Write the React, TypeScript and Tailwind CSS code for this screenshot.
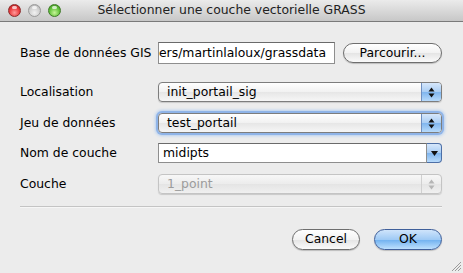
import React from 'react';

const font = { fontFamily: '"DejaVu Sans", "Liberation Sans", sans-serif' };

function Light({ tone }: { tone: 'red' | 'gray' | 'green' }) {
  const cls =
    tone === 'red'
      ? 'bg-[radial-gradient(circle_at_50%_70%,#ff9a9a_0%,#e8383a_55%,#a91b1d_100%)] border-[#8c2a2a]'
      : tone === 'green'
        ? 'bg-[radial-gradient(circle_at_50%_70%,#c8f59a_0%,#62c23a_55%,#3a8a1e_100%)] border-[#3d7a26]'
        : 'bg-[radial-gradient(circle_at_50%_70%,#f2f2f2_0%,#cfcfcf_55%,#a9a9a9_100%)] border-[#9a9a9a]';
  return (
    <div className={`relative w-[13px] h-[13px] rounded-full border ${cls}`}>
      <div className="absolute left-[3px] top-[1px] w-[5px] h-[3px] rounded-full bg-white/70" />
    </div>
  );
}

function Stepper({ disabled }: { disabled?: boolean }) {
  const fill = disabled ? '#b5b5b5' : '#111';
  return (
    <div
      className={`w-[20px] h-full flex items-center justify-center border-l ${
        disabled
          ? 'border-[#d0d0d0]'
          : 'border-[#6f8fc0] bg-[linear-gradient(#d6e7fb,#a9cdf4_50%,#7fb5ee_51%,#b7dafb)]'
      }`}
    >
      <svg width="7" height="11" viewBox="0 0 7 11">
        <path d="M3.5 0.5 L6.5 4.5 L0.5 4.5 Z" fill={fill} />
        <path d="M0.5 6.5 L6.5 6.5 L3.5 10.5 Z" fill={fill} />
      </svg>
    </div>
  );
}

function Popup({ value, focused, disabled }: { value: string; focused?: boolean; disabled?: boolean }) {
  return (
    <div
      className={`h-[20px] w-[284px] flex rounded-[4px] overflow-hidden border ${
        disabled
          ? 'border-[#c4c4c4] bg-[linear-gradient(#f7f7f7,#ececec_50%,#e4e4e4_51%,#f0f0f0)]'
          : 'border-[#7d7d7d] bg-[linear-gradient(#ffffff,#f1f1f1_50%,#e6e6e6_51%,#f6f6f6)]'
      } ${focused ? 'shadow-[0_0_0_2px_#8fb4e8,0_0_3px_3px_#b5cff0]' : 'shadow-[0_1px_1px_rgba(0,0,0,0.15)]'}`}
    >
      <div className={`flex-1 pl-[8px] flex items-center text-[12.4px] ${disabled ? 'text-[#9c9c9c]' : 'text-black'}`}>
        {value}
      </div>
      <Stepper disabled={disabled} />
    </div>
  );
}

function Row({ label, children, className }: { label: string; children: React.ReactNode; className?: string }) {
  return (
    <div className={`flex items-center ${className ?? ''}`}>
      <div className="w-[138px] text-[12.4px] text-black whitespace-nowrap">{label}</div>
      {children}
    </div>
  );
}

export default function App() {
  return (
    <div className="w-[463px] h-[273px] bg-[#ececec] relative overflow-hidden" style={font}>
      <div className="h-[22px] flex items-center relative bg-[linear-gradient(#ebebeb,#c7c7c7)] border-b border-[#7a7a7a]">
        <div className="flex gap-[7px] pl-[8px]">
          <Light tone="red" />
          <Light tone="gray" />
          <Light tone="green" />
        </div>
        <div className="absolute inset-0 flex items-center justify-center text-[12.4px] text-[#222]">
          Sélectionner une couche vectorielle GRASS
        </div>
      </div>

      <div className="px-[20px] pt-[20px] flex flex-col">
        <Row label="Base de données GIS">
          <div className="h-[22px] w-[177px] bg-white border border-[#8e8e8e] border-t-[#6a6a6a] flex items-center overflow-hidden whitespace-nowrap pl-0 text-[12.4px]">
            ers/martinlaloux/grassdata
          </div>
          <button className="ml-[8px] h-[20px] w-[99px] rounded-full border border-[#6e6e6e] bg-[linear-gradient(#ffffff,#f2f2f2_50%,#e4e4e4_51%,#fafafa)] text-[12.4px] shadow-[0_1px_1px_rgba(0,0,0,0.2)]">
            Parcourir...
          </button>
        </Row>
        <Row label="Localisation" className="mt-[18px]">
          <Popup value="init_portail_sig" />
        </Row>
        <Row label="Jeu de données" className="mt-[11px]">
          <Popup value="test_portail" focused />
        </Row>
        <Row label="Nom de couche" className="mt-[10px]">
          <div className="h-[20px] w-[284px] flex">
            <div className="flex-1 bg-white border border-[#8e8e8e] border-t-[#6a6a6a] flex items-center pl-[4px] text-[12.4px]">
              midipts
            </div>
            <div className="w-[15px] h-full rounded-r-[4px] border border-l-0 border-[#4d6fa6] bg-[linear-gradient(#d6e7fb,#a9cdf4_50%,#7fb5ee_51%,#b7dafb)] flex items-center justify-center">
              <svg width="7" height="5" viewBox="0 0 7 5">
                <path d="M0 0 L7 0 L3.5 5 Z" fill="#111" />
              </svg>
            </div>
          </div>
        </Row>
        <Row label="Couche" className="mt-[11px]">
          <Popup value="1_point" disabled />
        </Row>
        <div className="mt-[12px] h-[2px] w-[422px] border-t border-[#c4c4c4] bg-[#f6f6f6]" />
        <div className="mt-[21px] flex justify-end gap-[14px] pr-[1px]">
          <button className="h-[21px] w-[68px] rounded-full border border-[#6e6e6e] bg-[linear-gradient(#ffffff,#f2f2f2_50%,#e4e4e4_51%,#fafafa)] text-[12.4px] shadow-[0_1px_1px_rgba(0,0,0,0.2)]">
            Cancel
          </button>
          <button className="h-[21px] w-[68px] rounded-full border border-[#3f5f9a] bg-[linear-gradient(#cfe4fb,#9fcaf5_50%,#6fb0ef_51%,#bde0fd)] text-[12.4px] shadow-[0_1px_1px_rgba(0,0,0,0.2)]">
            OK
          </button>
        </div>
      </div>

      <svg className="absolute right-[1px] bottom-[1px]" width="11" height="11" viewBox="0 0 11 11">
        <path d="M10 1 L1 10 M10 4 L4 10 M10 7 L7 10" stroke="#9a9a9a" strokeWidth="1" />
      </svg>
    </div>
  );
}
